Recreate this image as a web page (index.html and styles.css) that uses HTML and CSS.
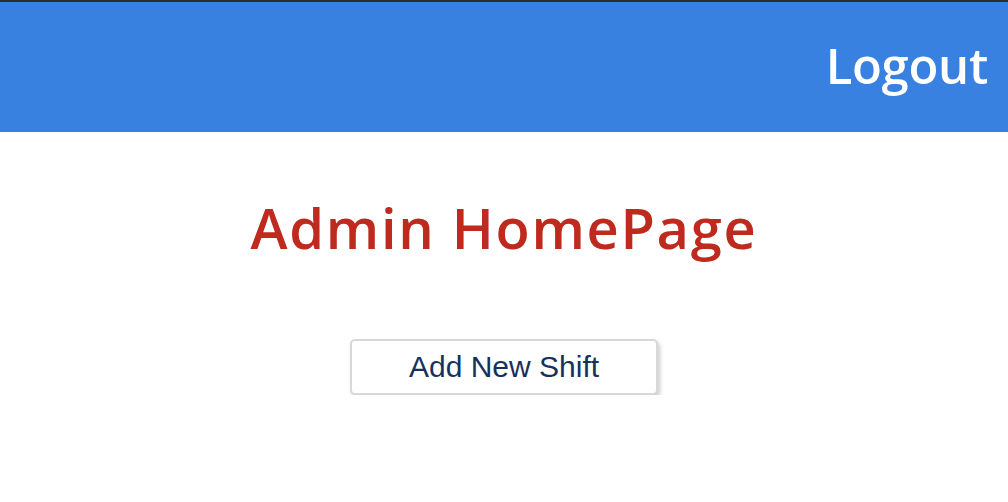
FILE: index.html
```html
<!DOCTYPE html>
<html>
<head>
<meta charset="utf-8">
<link rel="stylesheet" href="styles.css">
</head>
<body>
<header class="topbar">
  <a class="logout" href="#">Logout</a>
</header>
<main class="content">
  <h1 class="title">Admin HomePage</h1>
  <button class="btn">Add New Shift</button>
</main>
</body>
</html>
```
FILE: styles.css
```css
html, body {
  margin: 0;
  padding: 0;
  background: #ffffff;
}
body {
  border-top: 2px solid #2e2e30;
}
.topbar {
  height: 130px;
  background: #3881e0;
  display: flex;
  align-items: center;
  justify-content: flex-end;
  padding: 0 20px;
}
.logout {
  font-family: "Open Sans", "Lato", sans-serif;
  font-size: 49px;
  font-weight: 600;
  letter-spacing: -0.3px;
  color: #ffffff;
  text-decoration: none;
  line-height: 1;
  margin-top: -3px;
}
.content {
  display: flex;
  flex-direction: column;
  align-items: center;
}
.title {
  font-family: "Open Sans", "Lato", sans-serif;
  font-weight: 600;
  font-size: 56px;
  letter-spacing: 1.7px;
  color: #bf2a1f;
  margin: 59px 0 0 0;
  line-height: 72px;
}
.btn {
  margin-top: 76px;
  width: 308px;
  height: 56px;
  background: #ffffff;
  border: 2px solid #d8d8d8;
  border-radius: 5px;
  box-shadow: 2px 3px 4px rgba(0,0,0,0.2);
  font-family: "Liberation Sans", Arial, sans-serif;
  font-size: 30px;
  color: #15315e;
  cursor: pointer;
}
```
